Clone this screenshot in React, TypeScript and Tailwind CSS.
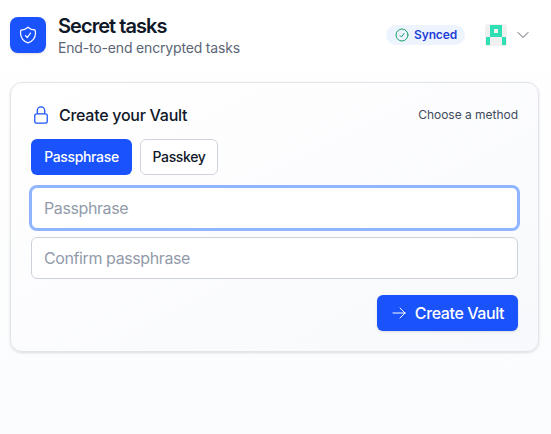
import {
  HiOutlineArrowRight,
  HiOutlineCheckCircle,
  HiOutlineChevronDown,
  HiOutlineLockClosed,
  HiOutlineShieldCheck,
} from "react-icons/hi2";

function Avatar() {
  return (
    <svg className="size-[22px] rounded-[3px] bg-[#f0f0f0]" viewBox="0 0 22 22" fill="#2ddfb3" shapeRendering="crispEdges">
      <path fillRule="evenodd" d="M5 1h12v12H5zM9 5v4h4V5z" />
      <path d="M1 13h4v8H1zM17 13h4v8h-4z" />
    </svg>
  );
}

function Header() {
  return (
    <header className="flex items-center justify-between">
      <div className="flex items-center gap-3">
        <div className="flex size-9 items-center justify-center rounded-lg bg-[#1a52fb] text-white shadow-sm">
          <HiOutlineShieldCheck className="size-5" />
        </div>
        <div className="pt-1">
          <h1 className="text-xl leading-5 font-semibold tracking-[-0.95px] text-[#101828]">Secret tasks</h1>
          <p className="mt-0.5 text-sm leading-5 tracking-[-0.17px] text-[#5b6576]">End-to-end encrypted tasks</p>
        </div>
      </div>
      <div className="flex items-center gap-5 pr-2">
        <span className="flex h-5 items-center gap-1 rounded-full bg-[#edf4fe] px-2 text-xs font-semibold tracking-[-0.15px] text-[#1d3fd8]">
          <HiOutlineCheckCircle className="size-4 text-[#17a168]" />
          Synced
        </span>
        <button className="flex items-center gap-2">
          <Avatar />
          <HiOutlineChevronDown className="size-4 text-[#5b6068]" />
        </button>
      </div>
    </header>
  );
}

export default function App() {
  return (
    <div className="h-[434px] bg-gradient-to-b from-white to-[#fbfcfd] pt-3 pr-3 pl-2.5 font-['Inter',sans-serif] text-[#101828]">
      <Header />
      <main className="mt-6 rounded-xl border border-[#e1e4e9] bg-gradient-to-br from-white to-[#f8f9fc] p-5 shadow-sm">
        <div className="flex h-6 items-center justify-between">
          <h2 className="flex items-center gap-2 text-base font-medium tracking-[-0.27px]">
            <HiOutlineLockClosed className="size-5 text-[#1a52fb]" />
            Create your Vault
          </h2>
          <span className="text-xs tracking-[-0.02px] text-[#3f4a5c]">Choose a method</span>
        </div>
        <div className="mt-3 flex gap-2 text-sm font-medium tracking-[-0.35px]">
          <button className="h-9 w-[101px] rounded-md bg-[#1a52fb] text-white">Passphrase</button>
          <button className="h-9 w-[78px] rounded-md border border-[#d0d5dd] bg-white">Passkey</button>
        </div>
        <div className="mt-3 flex flex-col gap-2">
          <input
            className="h-[42px] rounded-md border border-[#8fb5ff] bg-white px-3 text-base tracking-[-0.4px] ring-2 ring-[#8fb5ff] outline-none placeholder:text-[#929baa]"
            placeholder="Passphrase"
          />
          <input
            className="h-[42px] rounded-md border border-[#cdd2da] bg-white px-3 text-base tracking-[-0.4px] outline-none placeholder:text-[#929baa]"
            placeholder="Confirm passphrase"
          />
        </div>
        <div className="mt-4 flex justify-end">
          <button className="flex h-9 w-[141px] items-center justify-center gap-2 rounded-md bg-[#1a52fb] text-base font-medium tracking-[-0.4px] text-white shadow-sm">
            <HiOutlineArrowRight className="size-4" />
            Create Vault
          </button>
        </div>
      </main>
    </div>
  );
}
